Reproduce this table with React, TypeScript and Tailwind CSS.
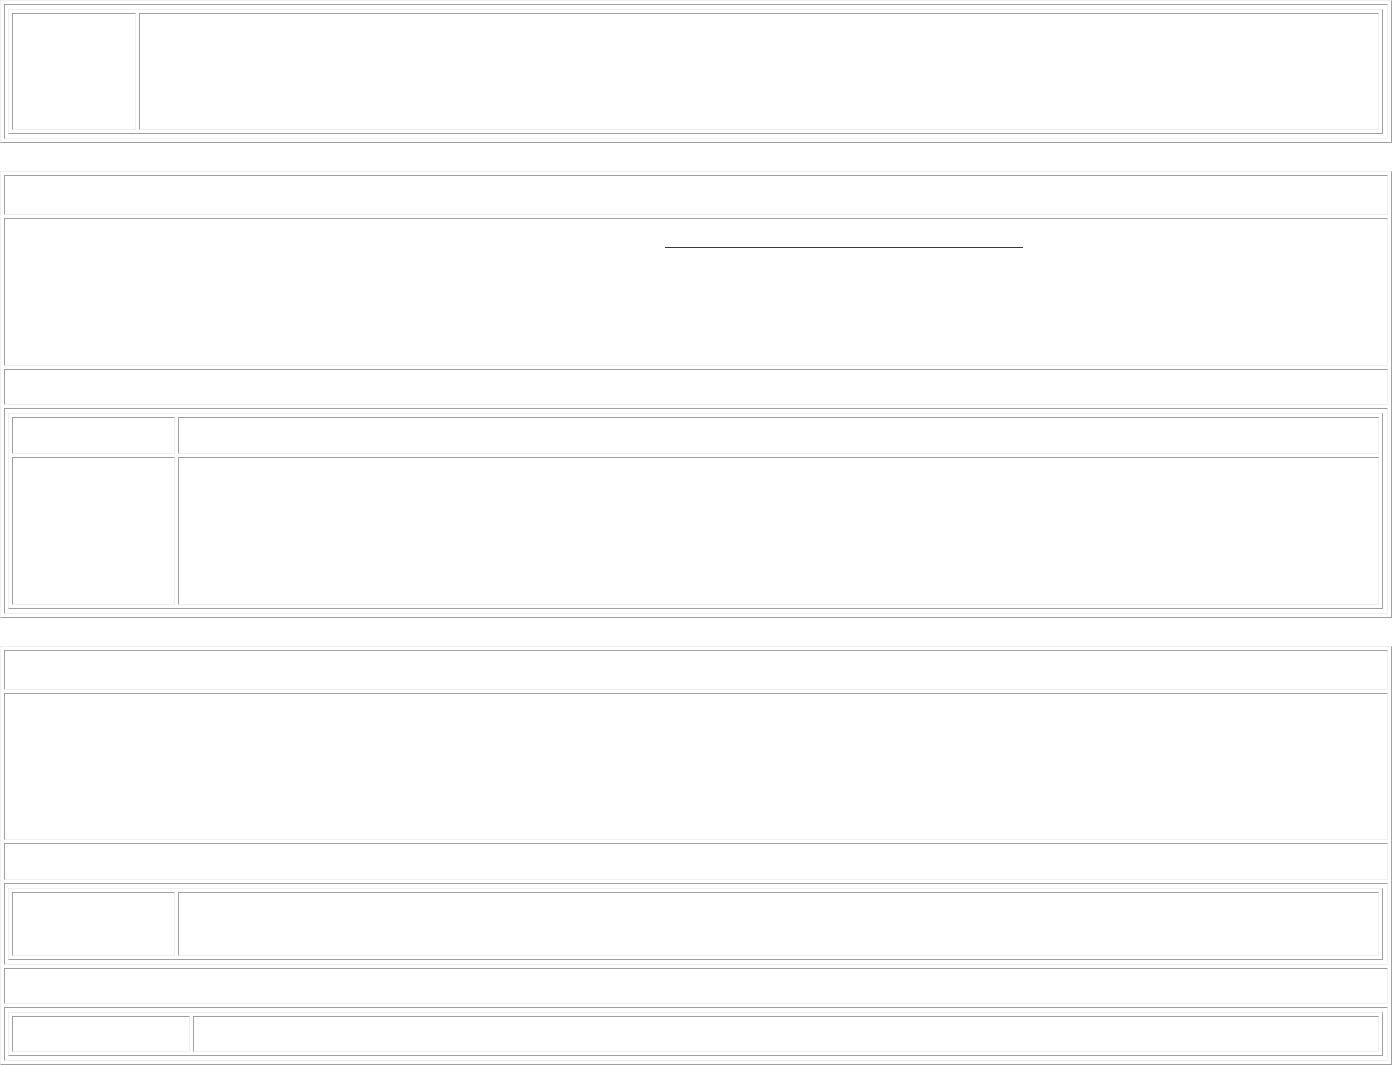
// bevelled old-school tables: outset table edge, inset cell edge
const table =
  "w-full border-separate border-spacing-[3px] border border-t-[#f0f0f0] border-l-[#f0f0f0] border-r-[#a0a0a0] border-b-[#a0a0a0]";
const cell =
  "border border-t-[#a0a0a0] border-l-[#a0a0a0] border-r-[#f0f0f0] border-b-[#f0f0f0] p-0 align-top";
const holder =
  "border border-t-[#a0a0a0] border-l-[#a0a0a0] border-r-[#f0f0f0] border-b-[#f0f0f0] pl-[3px] pr-1 py-1 align-top";

export default function App() {
  return (
    <div className="min-h-screen bg-white font-['Liberation_Serif',serif]">
      {/* HEADER */}
      <table className={table}>
        <tbody>
          <tr>
            <td className={holder}>
              <table className={table}>
                <tbody>
                  <tr>
                    <td className={`${cell} w-[124px] h-[117px]`}></td>
                    <td className={`${cell} h-[117px]`}></td>
                  </tr>
                </tbody>
              </table>
            </td>
          </tr>
        </tbody>
      </table>

      {/* FIRST BLOCK */}
      <table className={`${table} mt-[28px]`}>
        <tbody>
          <tr>
            <td className={`${cell} h-[40px]`}></td>
          </tr>
          <tr>
            <td className={`${cell} h-[148px]`}>
              <a className="block ml-[660px] mt-[28px] h-px w-[358px] bg-[#1535a8]" href="#"></a>
            </td>
          </tr>
          <tr>
            <td className={`${cell} h-[36px]`}></td>
          </tr>
          <tr>
            <td className={holder}>
              <table className={table}>
                <tbody>
                  <tr>
                    <td className={`${cell} w-[163px] h-[37px]`}></td>
                    <td className={`${cell} h-[37px]`}></td>
                  </tr>
                  <tr>
                    <td className={`${cell} w-[163px] h-[148px]`}></td>
                    <td className={`${cell} h-[148px]`}></td>
                  </tr>
                </tbody>
              </table>
            </td>
          </tr>
        </tbody>
      </table>

      {/* SECOND BLOCK */}
      <table className={`${table} mt-[28px]`}>
        <tbody>
          <tr>
            <td className={`${cell} h-[40px]`}></td>
          </tr>
          <tr>
            <td className={`${cell} h-[147px]`}></td>
          </tr>
          <tr>
            <td className={`${cell} h-[37px]`}></td>
          </tr>
          <tr>
            <td className={holder}>
              <table className={table}>
                <tbody>
                  <tr>
                    <td className={`${cell} w-[163px] h-[64px]`}></td>
                    <td className={`${cell} h-[64px]`}></td>
                  </tr>
                </tbody>
              </table>
            </td>
          </tr>
          <tr>
            <td className={`${cell} h-[36px]`}></td>
          </tr>
          <tr>
            <td className={holder}>
              <table className={table}>
                <tbody>
                  <tr>
                    <td className={`${cell} w-[178px] h-[36px]`}></td>
                    <td className={`${cell} h-[36px]`}></td>
                  </tr>
                </tbody>
              </table>
            </td>
          </tr>
        </tbody>
      </table>
    </div>
  );
}
